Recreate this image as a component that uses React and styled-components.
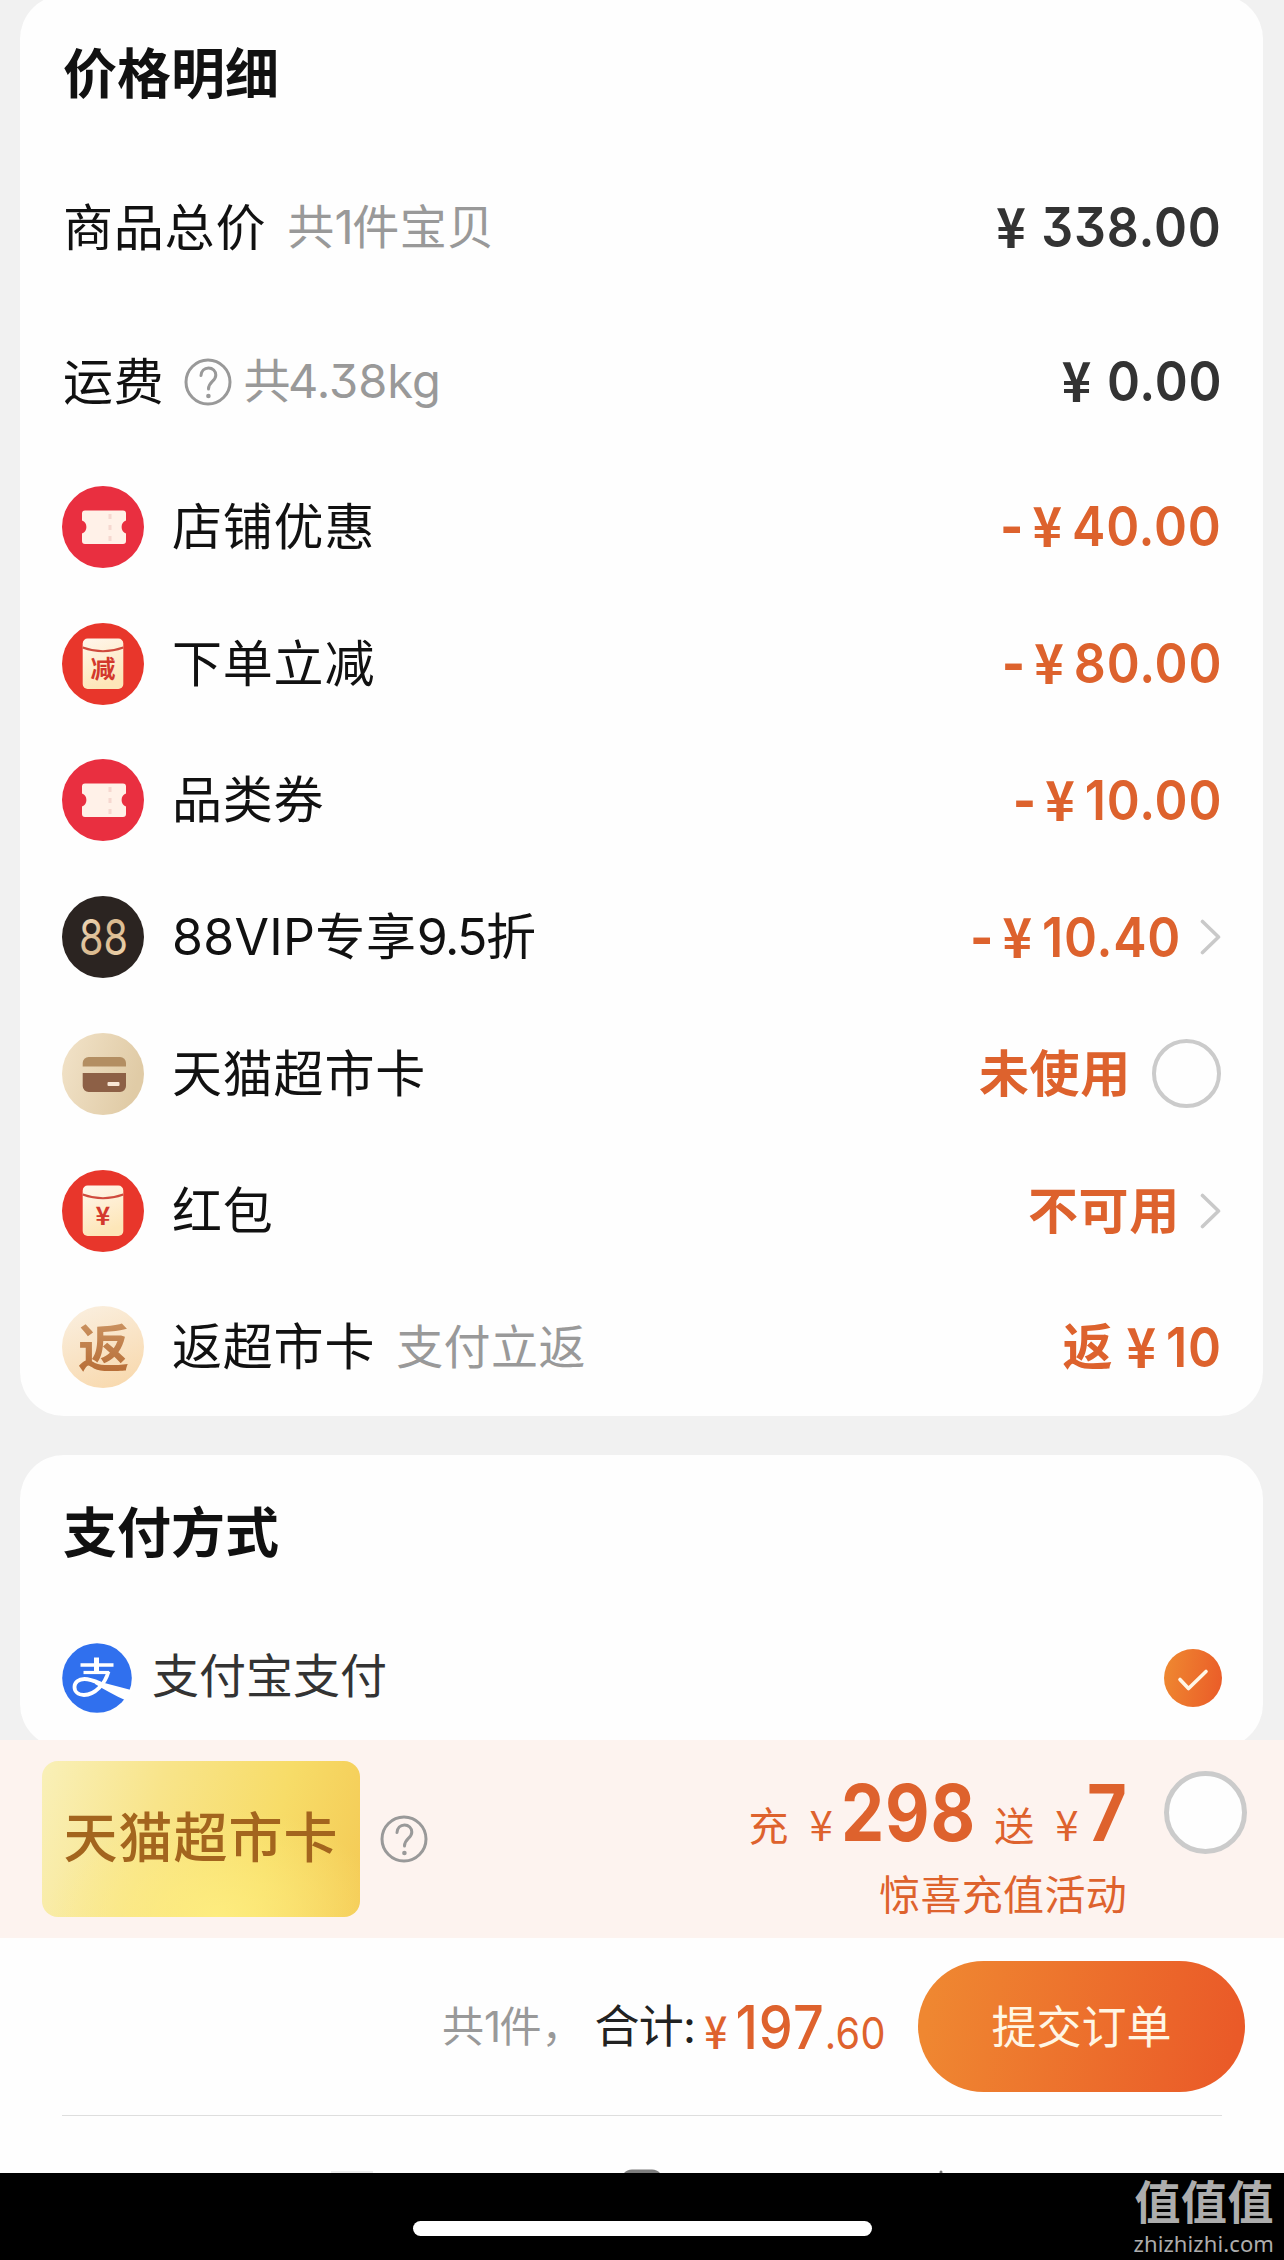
import React, { useState } from 'react';
import styled, { createGlobalStyle } from 'styled-components';

const cjk = '"Noto Sans CJK SC", sans-serif';

//优惠明细列表
const discounts = [
    { id: 'shop', icon: 'ticket', name: '店铺优惠', amount: '40.00' },
    { id: 'order', icon: 'envelope', mark: '减', name: '下单立减', amount: '80.00' },
    { id: 'category', icon: 'ticket', name: '品类券', amount: '10.00' },
    { id: 'vip', icon: 'vip', vip: '88VIP', name: '专享', rate: '9.5', unit: '折', amount: '10.40', arrow: true },
    { id: 'card', icon: 'card', name: '天猫超市卡', status: '未使用', radio: true },
    { id: 'packet', icon: 'envelope', mark: '¥', name: '红包', status: '不可用', arrow: true },
    { id: 'back', icon: 'back', name: '返超市卡', note: '支付立返', status: '返', rebate: '10' },
];

const QuestionIcon = () => (
    <svg width="48" height="48" viewBox="0 0 48 48" fill="none" stroke="#999" strokeWidth="3">
        <circle cx="24" cy="24" r="22" />
        <path d="M17 17.500c0.300-4.500 3.300-7.500 7.500-7.500s7.300 3 7.300 7c0 6.500-7.300 6.500-7.300 14" strokeLinecap="round" />
        <circle cx="24.400" cy="38" r="2.300" fill="#999" stroke="none" />
    </svg>
);

const ArrowIcon = () => (
    <svg width="22" height="38" viewBox="0 0 22 38" fill="none" stroke="#c9c9c9" strokeWidth="3.600" strokeLinecap="round" strokeLinejoin="round">
        <path d="M3.500 3.500L19.500 19L3.500 34.500" />
    </svg>
);

const AlipayIcon = () => (
    <svg width="70" height="70" viewBox="0 0 70 70" fill="none" stroke="#fff">
        <circle cx="35" cy="35" r="34.800" fill="#3070ee" stroke="none" />
        <path d="M18.500 22H51.500" strokeWidth="3.600" />
        <path d="M34.500 14.500V29" strokeWidth="5" />
        <path d="M21.500 29.500H47" strokeWidth="3.200" />
        <path d="M46.500 28.500C43 41 33 52 22 52c-6 0-9.500-3.500-9.500-8s4-8 10-8c5 0 10 2 16 4.500" strokeWidth="3.800" />
        <path d="M33 37.500L70.500 47.500L63 57C54 53 43 47 33 41z" fill="#fff" stroke="none" />
    </svg>
);

const TicketIcon = () => (
    <svg width="82" height="82" viewBox="0 0 82 82">
        <circle cx="41" cy="41" r="41" fill="#e92f40" />
        <path
            d="M23 24.500H61a3 3 0 0 1 3 3V34.500a7 7 0 0 0 0 13V55a3 3 0 0 1-3 3H23a3 3 0 0 1-3-3V47.500a7 7 0 0 0 0-13V27.500a3 3 0 0 1 3-3z"
            fill="#fff1e8"
        />
        <path d="M48 28v28" stroke="#f6d8d0" strokeWidth="3" strokeDasharray="5 6" />
    </svg>
);

const EnvelopeIcon = ({ mark }) => (
    <svg width="82" height="82" viewBox="0 0 82 82">
        <defs>
            <linearGradient id="paper" x1="0" y1="0" x2="0.300" y2="1">
                <stop offset="0" stopColor="#fff6ec" />
                <stop offset="1" stopColor="#fde6b8" />
            </linearGradient>
        </defs>
        <circle cx="41" cy="41" r="41" fill="#e8362b" />
        <rect x="20.700" y="15.500" width="40.600" height="50.500" rx="5" fill="url(#paper)" />
        <path d="M20.700 24.500q20.300 7.500 40.600 0" fill="none" stroke="#cf4a3d" strokeWidth="2" />
        <text x="41" y={mark === '¥' ? 54.5 : 54.5} textAnchor="middle" fontFamily={cjk} fontWeight="700" fontSize="25" fill="#d3382c">
            {mark}
        </text>
    </svg>
);

const VipIcon = () => (
    <svg width="82" height="82" viewBox="0 0 82 82">
        <defs>
            <linearGradient id="gold" x1="0" y1="0" x2="1" y2="1">
                <stop offset="0" stopColor="#f7e3c6" />
                <stop offset="0.500" stopColor="#d9b98e" />
                <stop offset="1" stopColor="#f3dcb8" />
            </linearGradient>
        </defs>
        <circle cx="41" cy="41" r="41" fill="#2b2421" />
        <text x="17" y="58.500" textLength="49" lengthAdjust="spacingAndGlyphs" fontFamily="Inter, sans-serif" fontSize="49" fill="url(#gold)">
            88
        </text>
    </svg>
);

const MarketCardIcon = () => (
    <svg width="82" height="82" viewBox="0 0 82 82">
        <defs>
            <linearGradient id="sand" x1="0" y1="0" x2="1" y2="0.300">
                <stop offset="0" stopColor="#f2e3c9" />
                <stop offset="1" stopColor="#e0cba6" />
            </linearGradient>
        </defs>
        <circle cx="41" cy="41" r="41" fill="url(#sand)" />
        <path d="M20.700 33.500V30a6 6 0 0 1 6-6H58a6 6 0 0 1 6 6V33.500z" fill="#b38e62" />
        <path d="M20.700 40H64V53a6 6 0 0 1-6 6H26.700a6 6 0 0 1-6-6z" fill="#8d6046" />
        <rect x="45.500" y="49" width="12" height="4" rx="1" fill="#f7e6d6" />
    </svg>
);

const BackIcon = () => (
    <svg width="82" height="82" viewBox="0 0 82 82">
        <defs>
            <linearGradient id="peach" x1="0.300" y1="0" x2="0.700" y2="1">
                <stop offset="0" stopColor="#faeedd" />
                <stop offset="1" stopColor="#f8d9ae" />
            </linearGradient>
            <linearGradient id="bronze" x1="0" y1="0" x2="0" y2="1">
                <stop offset="0" stopColor="#cf9c6c" />
                <stop offset="1" stopColor="#b4672f" />
            </linearGradient>
        </defs>
        <circle cx="41" cy="41" r="41" fill="url(#peach)" />
        <text x="41.500" y="60.500" textAnchor="middle" fontFamily={cjk} fontWeight="700" fontSize="51" fill="url(#bronze)">
            返
        </text>
    </svg>
);

const icons = {
    ticket: TicketIcon,
    envelope: EnvelopeIcon,
    vip: VipIcon,
    card: MarketCardIcon,
    back: BackIcon,
};

const DiscountRow = ({ item, checked, onToggle }) => {
    const Icon = icons[item.icon];
    return (
        <Row $height={136.75}>
            <Icon mark={item.mark} />
            <Label $indent>
                {item.vip && <Vip>{item.vip}</Vip>}
                {item.name}
                {item.rate && <Rate>{item.rate}</Rate>}
                {item.unit}
            </Label>
            {item.note && <Note>{item.note}</Note>}
            <Value $accent>
                {item.status && <Status>{item.status}</Status>}
                {item.amount && (
                    <Price>
                        <Minus>-</Minus>
                        <Yen>¥</Yen>
                        <Digits>{item.amount}</Digits>
                    </Price>
                )}
                {item.rebate && (
                    <Price>
                        <Yen>¥</Yen>
                        <Digits>{item.rebate}</Digits>
                    </Price>
                )}
            </Value>
            {item.arrow && <ArrowBox><ArrowIcon /></ArrowBox>}
            {item.radio && <Radio $size={69} $gap={21} $line={4} $on={checked} onClick={onToggle} />}
        </Row>
    );
};

const App = () => {
    const [useCard, setUseCard] = useState(false);
    const [recharge, setRecharge] = useState(false);

    return (
        <Page>
            <GlobalStyle />
            <Content>
                <PriceCard>
                    <Row $height={154}>
                        <Title>价格明细</Title>
                    </Row>
                    <Row $height={154}>
                        <Label>商品总价</Label>
                        <Note>共<One>1</One>件宝贝</Note>
                        <Value>
                            <Price>
                                <Yen $wide>¥</Yen>
                                <Digits>338.00</Digits>
                            </Price>
                        </Value>
                    </Row>
                    <Row $height={154}>
                        <Label>运费</Label>
                        <HelpBox><QuestionIcon /></HelpBox>
                        <Note $tight>共<Weight>4.38kg</Weight></Note>
                        <Value>
                            <Price>
                                <Yen $wide>¥</Yen>
                                <Digits>0.00</Digits>
                            </Price>
                        </Value>
                    </Row>
                    {discounts.map((item) => (
                        <DiscountRow key={item.id} item={item} checked={useCard} onToggle={() => setUseCard(!useCard)} />
                    ))}
                </PriceCard>

                <PayCard>
                    <Row $height={154}>
                        <Title>支付方式</Title>
                    </Row>
                    <Row $height={138}>
                        <AlipayIcon />
                        <PayName>支付宝支付</PayName>
                        <Checked>
                            <svg width="58" height="58" viewBox="0 0 58 58" fill="none" stroke="#fff6e6" strokeWidth="3.600" strokeLinecap="round" strokeLinejoin="round">
                                <path d="M16 30.500L24.500 39.500L42 22.500" />
                            </svg>
                        </Checked>
                    </Row>
                </PayCard>
            </Content>

            <Banner>
                <MarketCard>天猫超市卡</MarketCard>
                <BannerHelp><QuestionIcon /></BannerHelp>
                <Promo>
                    <PromoLine>
                        <PromoWord>充</PromoWord>
                        <PromoYen>¥</PromoYen>
                        <PromoNumber $cut={20}>298</PromoNumber>
                        <PromoWord $next>送</PromoWord>
                        <PromoYen>¥</PromoYen>
                        <PromoNumber $cut={6}>7</PromoNumber>
                    </PromoLine>
                    <PromoNote>惊喜充值活动</PromoNote>
                </Promo>
                <Radio $size={83} $gap={37} $line={5} $on={recharge} onClick={() => setRecharge(!recharge)} />
            </Banner>

            <Checkout>
                <Count>共<One>1</One>件，</Count>
                <Total>合计:</Total>
                <TotalPrice>
                    <TotalYen>¥</TotalYen>
                    <TotalInt>197</TotalInt>
                    <TotalDec>.60</TotalDec>
                </TotalPrice>
                <SubmitButton>提交订单</SubmitButton>
            </Checkout>

            <NextSection>
                <svg width="1284" height="6" viewBox="0 0 1284 6">
                    <path d="M331 5h42" stroke="#ececec" strokeWidth="2" />
                    <path d="M624 6q3-3.500 8-3.500h20q5 0 8 3.500z" fill="#7d7d7d" />
                    <circle cx="941" cy="5" r="1.500" fill="#777" />
                </svg>
            </NextSection>

            <HomeArea>
                <HomeBar />
                <Watermark>
                    <WatermarkName>值值值</WatermarkName>
                    <WatermarkSite>zhizhizhi.com</WatermarkSite>
                </Watermark>
            </HomeArea>
        </Page>
    );
};

export default App;


const GlobalStyle = createGlobalStyle`
    body {
        margin: 0;
        background: #f1f1f1;
    }
    svg {
        display: block;
        flex-shrink: 0;
    }
`;

//整个页面的容器
const Page = styled.div`
    width: 1284px;
    height: 2260px;
    overflow: hidden;
    display: flex;
    flex-direction: column;
    background: #f1f1f1;
    font-family: Inter, ${cjk};
    font-feature-settings: 'cv09';
    line-height: 1;
    white-space: nowrap;
`;

//可滚动区域
const Content = styled.div`
    height: 1740px;
    overflow: hidden;
    display: flex;
    flex-direction: column;
    flex-shrink: 0;
    gap: 39px;
`;

const Card = styled.section`
    box-sizing: border-box;
    margin: 0 21px 0 20px;
    padding: 0 42px;
    border-radius: 44px;
    background: #fefefe;
    flex-shrink: 0;
`;

const PriceCard = styled(Card)`
    height: 1421px;
    margin-top: -5px;
    padding-top: 1.5px;
`;

const PayCard = styled(Card)`
    height: 293px;
`;

const Row = styled.div`
    display: flex;
    align-items: center;
    height: ${(props) => props.$height}px;
`;

const Title = styled.h2`
    margin: 0 0 0 1px;
    padding-top: 3px;
    font-size: 54px;
    font-weight: 700;
    color: #111;
`;

const Label = styled.span`
    margin-left: ${(props) => (props.$indent ? 28 : 1)}px;
    font-size: 50px;
    letter-spacing: 0.8px;
    color: #111;
`;

const Vip = styled.span`
    letter-spacing: 0.3px;
`;

const Rate = styled.span`
    letter-spacing: -1.6px;
`;

//灰色的补充说明
const Note = styled.span`
    margin-left: ${(props) => (props.$tight ? 12 : 21)}px;
    padding-bottom: 2px;
    font-size: 47px;
    letter-spacing: 0.4px;
    color: #999;
`;

const One = styled.span`
    letter-spacing: -1.5px;
`;

const Weight = styled.span`
    margin-left: -3px;
    letter-spacing: 0;
`;

const HelpBox = styled.div`
    margin-left: 19px;
`;

//右侧金额
const Value = styled.div`
    display: flex;
    align-items: center;
    margin-left: auto;
    color: ${(props) => (props.$accent ? '#dd622d' : '#333')};
`;

const Status = styled.span`
    font-size: 50px;
    font-weight: 700;
    letter-spacing: 0.7px;
`;

//数字比常规字形略窄
const Price = styled.div`
    display: flex;
    align-items: center;
    margin-right: -1px;
    transform: scaleX(0.91);
    transform-origin: right center;

    ${Status} + & {
        margin-left: -6px;
    }
`;

const Minus = styled.span`
    font-size: 55px;
    font-weight: 700;
`;

const Yen = styled.span`
    margin: 0 ${(props) => (props.$wide ? 17 : 11)}px 0 10px;
    padding-bottom: 6px;
    font-family: ${cjk};
    font-size: 55px;
    font-weight: 700;
`;

const Digits = styled.span`
    font-size: 55px;
    font-weight: 600;
    letter-spacing: 0.9px;
`;

const ArrowBox = styled.div`
    margin-left: 19px;
`;

const Radio = styled.button`
    box-sizing: border-box;
    flex-shrink: 0;
    width: ${(props) => props.$size}px;
    height: ${(props) => props.$size}px;
    margin: 0 0 0 ${(props) => props.$gap}px;
    padding: 0;
    border: ${(props) => props.$line}px solid #cbcbcb;
    border-radius: 50%;
    background: ${(props) => (props.$on ? '#ea5f28' : '#fefefe')};
`;

const PayName = styled.span`
    margin-left: 20px;
    padding-bottom: 5px;
    font-size: 47px;
    letter-spacing: 0;
    color: #333;
`;

const Checked = styled.div`
    width: 58px;
    height: 58px;
    margin: 0 -1px 0 auto;
    border-radius: 50%;
    background: linear-gradient(100deg, #ef8a31, #ea5a28);
`;

//超市卡充值横幅
const Banner = styled.div`
    box-sizing: border-box;
    display: flex;
    align-items: flex-start;
    flex-shrink: 0;
    height: 198px;
    padding: 21px 37px 0 42px;
    background: #fdf3ef;

    ${Radio} {
        margin-top: 10px;
    }
`;

const MarketCard = styled.div`
    display: flex;
    align-items: center;
    justify-content: center;
    width: 318px;
    height: 156px;
    border-radius: 16px;
    background:
        radial-gradient(ellipse 170px 110px at 55% 100%, rgba(255, 240, 130, 0.8), rgba(255, 240, 130, 0) 100%),
        linear-gradient(105deg, #f9f0b8 0%, #f8e48a 35%, #f7dc68 70%, #f4ca55 100%);
    font-size: 54px;
    font-weight: 500;
    letter-spacing: 1px;
    color: #a3651e;
`;

const BannerHelp = styled.div`
    margin: 54px 0 0 20px;
`;

const Promo = styled.div`
    display: flex;
    flex-direction: column;
    align-items: flex-end;
    margin: 13px 0 0 auto;
    color: #de622d;
`;

const PromoLine = styled.div`
    display: flex;
    align-items: baseline;
    height: 78px;
`;

const PromoWord = styled.span`
    margin-left: ${(props) => (props.$next ? 20 : 0)}px;
    font-size: 40px;
`;

const PromoYen = styled.span`
    margin: 0 8px 0 21px;
    font-family: ${cjk};
    font-size: 42px;
`;

const PromoNumber = styled.span`
    margin-right: ${(props) => -props.$cut}px;
    font-size: 78px;
    font-weight: 700;
    letter-spacing: 1px;
    transform: scaleX(0.88);
    transform-origin: left center;
`;

const PromoNote = styled.span`
    margin-top: 23px;
    font-size: 41px;
    letter-spacing: 0.3px;
`;

//底部结算栏
const Checkout = styled.div`
    box-sizing: border-box;
    display: flex;
    align-items: center;
    justify-content: flex-end;
    flex-shrink: 0;
    height: 177px;
    padding-right: 39px;
    background: #fefefe;
`;

const Count = styled.span`
    font-size: 42px;
    color: #999;
`;

const Total = styled.span`
    margin-left: 11px;
    font-size: 45px;
    letter-spacing: -0.8px;
    color: #222;
`;

const TotalPrice = styled.div`
    display: flex;
    align-items: baseline;
    margin: 0 32px 0 -11px;
    color: #de622d;
    transform: scaleX(0.9);
    transform-origin: right center;
`;

const TotalYen = styled.span`
    margin-right: 9px;
    font-family: ${cjk};
    font-size: 45px;
    font-weight: 500;
`;

const TotalInt = styled.span`
    font-size: 60px;
    font-weight: 500;
    letter-spacing: 1.2px;
`;

const TotalDec = styled.span`
    font-size: 44px;
    font-weight: 400;
    letter-spacing: 0.4px;
`;

const SubmitButton = styled.button`
    width: 327px;
    height: 131px;
    padding: 2px 0 0;
    border: none;
    border-radius: 66px;
    background: linear-gradient(100deg, #ef8731 5%, #ea5a28 95%);
    font-family: Inter, ${cjk};
    font-size: 45px;
    line-height: 1;
    color: #fff6e4;
`;

const NextSection = styled.div`
    box-sizing: border-box;
    display: flex;
    flex-direction: column;
    justify-content: space-between;
    flex-shrink: 0;
    height: 58px;
    background: #fefefe;

    &::before {
        content: '';
        height: 1px;
        margin: 0 62px;
        background: #dedede;
    }
`;

const HomeArea = styled.div`
    display: flex;
    flex-shrink: 0;
    height: 87px;
    background: #000;
`;

const HomeBar = styled.div`
    width: 459px;
    height: 15px;
    margin: 48px 0 0 413px;
    border-radius: 8px;
    background: #fff;
`;

const Watermark = styled.div`
    display: flex;
    flex-direction: column;
    align-items: flex-end;
    margin: 7px 10px 0 auto;
    color: #adadad;
`;

const WatermarkName = styled.span`
    font-family: "Liberation Sans", ${cjk};
    font-size: 46px;
    font-weight: 700;
    letter-spacing: 0.5px;
`;

const WatermarkSite = styled.span`
    margin-top: 6px;
    font-family: "Noto Sans", sans-serif;
    font-size: 22px;
    letter-spacing: 0.1px;
`;
